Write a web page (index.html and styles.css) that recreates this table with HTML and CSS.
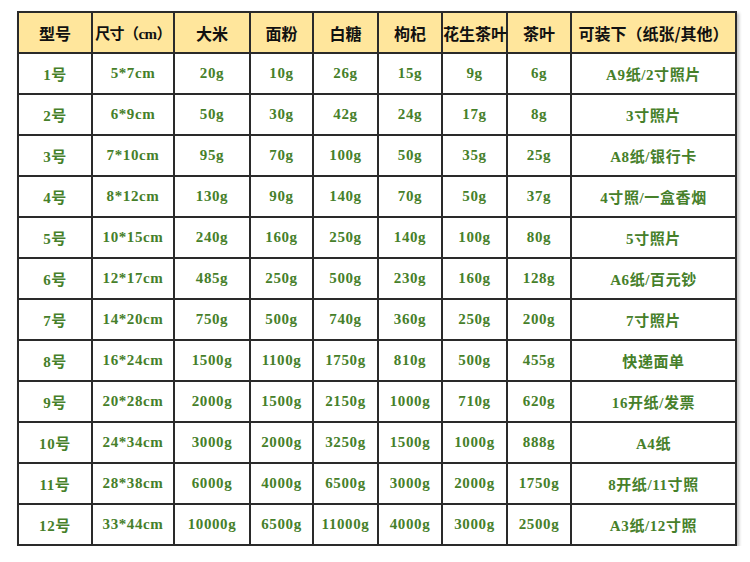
FILE: index.html
```html
<!DOCTYPE html>
<html lang="zh">
<head>
<meta charset="utf-8">
<link rel="stylesheet" href="styles.css">
</head>
<body>
<div class="wrap">
<table class="sizes">
<colgroup>
<col style="width:74px"><col style="width:82px"><col style="width:76px"><col style="width:63px"><col style="width:65px"><col style="width:64px"><col style="width:65px"><col style="width:64px"><col style="width:165px">
</colgroup>
<thead>
<tr><th>型号</th><th class="tight">尺寸（<span class="lat">cm</span>）</th><th>大米</th><th>面粉</th><th>白糖</th><th>枸杞</th><th>花生茶叶</th><th>茶叶</th><th>可装下（纸张/其他）</th></tr>
</thead>
<tbody>
<tr><td>1号</td><td>5*7cm</td><td>20g</td><td>10g</td><td>26g</td><td>15g</td><td>9g</td><td>6g</td><td>A9纸/2寸照片</td></tr>
<tr><td>2号</td><td>6*9cm</td><td>50g</td><td>30g</td><td>42g</td><td>24g</td><td>17g</td><td>8g</td><td>3寸照片</td></tr>
<tr><td>3号</td><td>7*10cm</td><td>95g</td><td>70g</td><td>100g</td><td>50g</td><td>35g</td><td>25g</td><td>A8纸/银行卡</td></tr>
<tr><td>4号</td><td>8*12cm</td><td>130g</td><td>90g</td><td>140g</td><td>70g</td><td>50g</td><td>37g</td><td>4寸照/一盒香烟</td></tr>
<tr><td>5号</td><td>10*15cm</td><td>240g</td><td>160g</td><td>250g</td><td>140g</td><td>100g</td><td>80g</td><td>5寸照片</td></tr>
<tr><td>6号</td><td>12*17cm</td><td>485g</td><td>250g</td><td>500g</td><td>230g</td><td>160g</td><td>128g</td><td>A6纸/百元钞</td></tr>
<tr><td>7号</td><td>14*20cm</td><td>750g</td><td>500g</td><td>740g</td><td>360g</td><td>250g</td><td>200g</td><td>7寸照片</td></tr>
<tr><td>8号</td><td>16*24cm</td><td>1500g</td><td>1100g</td><td>1750g</td><td>810g</td><td>500g</td><td>455g</td><td>快递面单</td></tr>
<tr><td>9号</td><td>20*28cm</td><td>2000g</td><td>1500g</td><td>2150g</td><td>1000g</td><td>710g</td><td>620g</td><td>16开纸/发票</td></tr>
<tr><td>10号</td><td>24*34cm</td><td>3000g</td><td>2000g</td><td>3250g</td><td>1500g</td><td>1000g</td><td>888g</td><td>A4纸</td></tr>
<tr><td>11号</td><td>28*38cm</td><td>6000g</td><td>4000g</td><td>6500g</td><td>3000g</td><td>2000g</td><td>1750g</td><td>8开纸/11寸照</td></tr>
<tr><td>12号</td><td>33*44cm</td><td>10000g</td><td>6500g</td><td>11000g</td><td>4000g</td><td>3000g</td><td>2500g</td><td>A3纸/12寸照</td></tr>
</tbody>
</table>
</div>
</body>
</html>
```
FILE: styles.css
```css
html, body {
  margin: 0;
  padding: 0;
  background: #ffffff;
}
.wrap {
  padding: 11px 0 0 17px;
}
.sizes {
  border-collapse: collapse;
  table-layout: fixed;
  width: 720px;
  box-shadow: 2px 2px 3px rgba(0,0,0,0.25);
}
.sizes th, .sizes td {
  border: 2px solid #2a2a2a;
  height: 39px;
  padding: 0;
  text-align: center;
  white-space: nowrap;
}
.sizes th {
  background: #ffe69c;
  color: #111111;
  font-family: "Noto Sans CJK SC", sans-serif;
  font-weight: 700;
  font-size: 16px;
}
.sizes th.tight {
  font-size: 15px;
  letter-spacing: -0.6px;
}
.sizes th .lat {
  font-family: "Liberation Serif", serif;
}
.sizes td {
  color: #46802a;
  font-family: "Liberation Serif", "Noto Sans CJK SC", serif;
  font-weight: 700;
  font-size: 15px;
  letter-spacing: 0.6px;
}
```
